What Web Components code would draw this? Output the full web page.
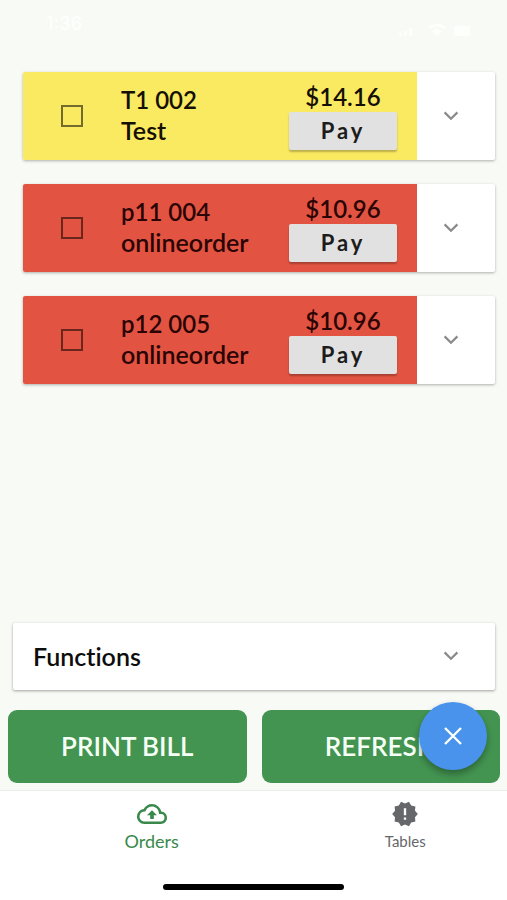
<!DOCTYPE html>
<html lang="en">
<head>
<meta charset="utf-8">
<meta name="viewport" content="width=device-width, initial-scale=1">
<title>Orders</title>
<style>
  body { margin: 0; background: #f8faf5; font-family: Lato, "Open Sans", sans-serif; font-variant-ligatures: none; color: #0d0d0d; }
</style>
</head>
<body>
<pos-app></pos-app>
<script>
const define = (name, html, setup) => {
  const template = document.createElement('template');
  template.innerHTML = html;
  customElements.define(name, class extends HTMLElement {
    constructor() {
      super();
      this.attachShadow({ mode: 'open' }).append(template.content.cloneNode(true));
    }
    connectedCallback() { if (setup) setup(this, this.shadowRoot); }
  });
};

define('status-bar', `
<style>
  :host { display: flex; justify-content: space-between; align-items: flex-start; box-sizing: border-box; height: 72px; padding: 12px 32px 0 46px; color: #fdfffc; }
  .time { font: 600 18px/24px Inter, sans-serif; }
  svg { display: block; margin-top: 10px; }
</style>
<span class="time">1:36</span>
<svg width="78" height="18" viewBox="0 0 78 18" fill="currentColor" aria-hidden="true">
  <rect x="2" y="11" width="3" height="3"/><rect x="7" y="9" width="3" height="5"/><rect x="12" y="6" width="3" height="8"/>
  <path d="M31 5q9-7 18 0l-2 2q-7-5-14 0zM35 9q5-4 10 0l-5 5z"/>
  <rect x="57" y="4" width="16" height="10" rx="2"/>
</svg>`);

define('chevron-button', `
<style>
  :host { display: flex; align-items: center; justify-content: center; box-sizing: border-box; padding-right: 10px; }
  button { display: flex; align-items: center; justify-content: center; width: 36px; height: 36px; padding: 0; border: 0; background: none; color: #8a8a8a; }
</style>
<button type="button"><svg width="16" height="10" viewBox="0 0 16 10" fill="none" stroke="currentColor" stroke-width="2.200"><path d="M1.6 1.4 8 7.8l6.400-6.400"/></svg></button>`,
  (host, root) => root.querySelector('button').setAttribute('aria-label', host.getAttribute('label')));

define('order-card', `
<style>
  :host { display: grid; grid-template-columns: 1fr 78px; min-height: 88px; background: #fff; border-radius: 2px; box-shadow: 0 1px 3px rgba(0,0,0,.3); }
  .body { display: grid; grid-template-columns: 60px 1fr 108px; padding: 0 20px 0 38px; background: var(--tone); border-radius: 2px 0 0 2px; }
  input { appearance: none; align-self: center; width: 22px; height: 22px; margin: 0; border: 2px solid rgba(0,0,0,.54); }
  input:checked { background: rgba(0,0,0,.54); }
  label { align-self: center; padding-bottom: 2px; font-size: 24px; font-weight: 600; line-height: 30px; color: var(--ink); }
  .name { display: block; font-size: 25px; }
  .code { display: block; }
  .pay { display: flex; flex-direction: column; padding-top: 10px; text-align: center; }
  .price { font-size: 24px; font-weight: 600; line-height: 30px; color: var(--ink); }
  button { height: 38px; padding: 0; border: 0; border-radius: 2px; background: #e1e1e1; color: #1c1c1c; font: 700 22px/36px Lato, sans-serif; letter-spacing: 3px; box-shadow: 0 2px 2px rgba(0,0,0,.26); }
</style>
<div class="body">
  <input type="checkbox" id="pick">
  <label for="pick"><span class="code"><slot name="code"></slot></span><span class="name"><slot></slot></span></label>
  <div class="pay"><span class="price"><slot name="price"></slot></span><button type="button">Pay</button></div>
</div>
<chevron-button label="Show order details"></chevron-button>`);

define('functions-panel', `
<style>
  :host { display: grid; grid-template-columns: 1fr 78px; align-items: center; min-height: 67px; margin: 0 12px 0 13px; padding: 0 0 1px 20px; background: #fff; border-radius: 2px; box-shadow: 0 1px 3px rgba(0,0,0,.36); box-sizing: border-box; font-size: 25px; line-height: 30px; font-weight: 600; }
</style>
<span><slot></slot></span>
<chevron-button label="Expand functions"></chevron-button>`);

define('action-button', `
<style>
  :host { display: block; }
  button { display: block; width: 100%; min-height: 73px; padding: 0 0 2px; border: 0; border-radius: 9px; background: #439451; color: #f5fff5; font: 600 26px/32px Lato, sans-serif; }
</style>
<button type="button"><slot></slot></button>`);

define('close-fab', `
<style>
  :host { display: block; }
  button { display: flex; align-items: center; justify-content: center; width: 68px; height: 68px; padding: 0; border: 0; border-radius: 50%; background: #4993ec; color: #fff; box-shadow: 0 4px 7px rgba(0,0,0,.32); }
</style>
<button type="button" aria-label="Close"><svg width="18" height="18" viewBox="0 0 18 18" fill="none" stroke="currentColor" stroke-width="2.300"><path d="m1 1 16 16M17 1 1 17"/></svg></button>`);

define('nav-tab', `
<style>
  :host { display: block; flex: 1; color: #66676b; }
  :host([current]) { color: #38894a; }
  a { display: flex; flex-direction: column; align-items: center; gap: 2px; padding: 8px 0 0 50px; color: inherit; text-decoration: none; font-size: var(--tab-size, 15px); line-height: 20px; }
  ::slotted(svg) { display: block; }
</style>
<a href="#"><slot name="icon"></slot><span><slot></slot></span></a>`);

define('bottom-nav', `
<style>
  :host { display: block; background: #fff; border-top: 1px solid #eceeea; }
  nav { display: flex; min-height: 93px; }
  .home { width: 181px; height: 6px; margin: 0 auto 10px; border-radius: 3px; background: #000; }
</style>
<nav><slot></slot></nav>
<div class="home"></div>`);

define('pos-app', `
<style>
  :host { display: flex; flex-direction: column; min-height: 100vh; }
  main { flex: 1; display: flex; flex-direction: column; }
  .orders { flex: 1; display: flex; flex-direction: column; gap: 24px; margin: 0 12px 24px 23px; }
  .yellow { --tone: #faea61; --ink: #150f05; }
  .red { --tone: #e25441; --ink: #2b0505; }
  .actions { position: relative; display: grid; grid-template-columns: 1fr 1fr; gap: 15px; padding: 20px 7px 7px 8px; }
  close-fab { position: absolute; top: 12px; right: 20px; }
  .first { --tab-size: 18px; }
</style>
<status-bar></status-bar>
<main>
  <section class="orders">
    <order-card class="yellow"><span slot="code">T1 002</span>Test<span slot="price">$14.16</span></order-card>
    <order-card class="red"><span slot="code">p11 004</span>onlineorder<span slot="price">$10.96</span></order-card>
    <order-card class="red"><span slot="code">p12 005</span>onlineorder<span slot="price">$10.96</span></order-card>
  </section>
  <functions-panel>Functions</functions-panel>
  <div class="actions">
    <action-button>PRINT BILL</action-button>
    <action-button>REFRESH</action-button>
    <close-fab></close-fab>
  </div>
</main>
<bottom-nav>
  <nav-tab current class="first">
    <svg slot="icon" width="30" height="30" viewBox="0 0 24 24" fill="currentColor"><path d="M19.350 10.040A7.490 7.490 0 0 0 12 4C9.110 4 6.600 5.640 5.350 8.040A5.994 5.994 0 0 0 0 14c0 3.310 2.690 6 6 6h13c2.760 0 5-2.240 5-5 0-2.640-2.050-4.780-4.650-4.960zM19 18H6c-2.210 0-4-1.790-4-4 0-2.050 1.530-3.760 3.560-3.970l1.070-.110.500-.950A5.469 5.469 0 0 1 12 6c2.620 0 4.880 1.860 5.390 4.430l.300 1.500 1.530.110A2.980 2.980 0 0 1 22 15c0 1.650-1.350 3-3 3zM8 13h2.550v3h2.900v-3H16l-4-4z"/></svg>
    Orders
  </nav-tab>
  <nav-tab>
    <svg slot="icon" width="28" height="30" viewBox="0 0 24 24" fill="currentColor"><path d="m23 12-2.440-2.780.340-3.680-3.610-.820-1.890-3.180L12 3 8.600 1.540 6.710 4.720l-3.610.810.340 3.680L1 12l2.440 2.780-.340 3.690 3.610.820 1.890 3.180L12 21l3.400 1.460 1.890-3.180 3.610-.820-.340-3.680zM13 17h-2v-2h2zm0-4h-2V7h2z"/></svg>
    Tables
  </nav-tab>
</bottom-nav>`);
</script>
</body>
</html>
